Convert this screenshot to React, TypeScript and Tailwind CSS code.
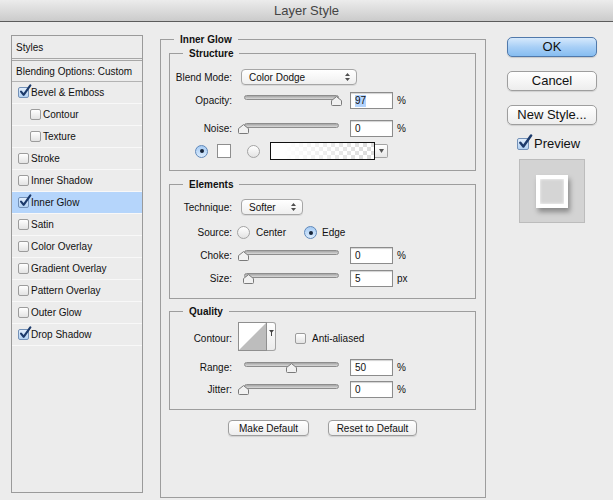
import React from "react";

const Checkbox = ({ checked = false, big = false }: { checked?: boolean; big?: boolean }) => (
  <span
    className={`relative inline-block shrink-0 rounded-[2px] border ${
      checked
        ? "border-[#7391b8] bg-gradient-to-b from-[#e2eefc] to-[#b2d1f2]"
        : "border-[#9c9c9c] bg-gradient-to-b from-white to-[#e3e3e3]"
    } ${big ? "w-[12px] h-[12px]" : "w-[11px] h-[11px]"}`}
  >
    {checked && (
      <svg
        className={big ? "absolute left-[0px] top-[-5px]" : "absolute left-[0px] top-[-4px]"}
        width={big ? 15 : 13}
        height={big ? 15 : 13}
        viewBox="0 0 14 14"
      >
        <path
          d="M2.2 8.2 L5 11.6 L12.2 1.4"
          fill="none"
          stroke="#1c3a6b"
          strokeWidth="2.3"
          strokeLinecap="round"
          strokeLinejoin="round"
        />
      </svg>
    )}
  </span>
);

const Radio = ({ on = false }: { on?: boolean }) => (
  <span
    className={`flex items-center justify-center shrink-0 w-[13px] h-[13px] rounded-full border ${
      on
        ? "border-[#5f88ba] bg-gradient-to-b from-[#a6cbf3] to-[#dcecfd]"
        : "border-[#a3a3a3] bg-gradient-to-b from-white to-[#e3e3e3]"
    }`}
  >
    {on && <span className="w-[4px] h-[4px] rounded-full bg-[#17253a]" />}
  </span>
);

const UpDown = () => (
  <svg width="5" height="8" viewBox="0 0 5 8">
    <path d="M2.5 0 L5 3 H0 Z M2.5 8 L5 5 H0 Z" fill="#4f4f4f" />
  </svg>
);

const Thumb = ({ pos }: { pos: string }) => (
  <svg className={`absolute top-[4px] ${pos}`} width="11" height="10" viewBox="0 0 11 10">
    <path
      d="M5.5 0.6 L10.5 4.6 V8.5 Q10.5 9.5 9.5 9.5 H1.5 Q0.5 9.5 0.5 8.5 V4.6 Z"
      fill="#f1f1f1"
      stroke="#7a7a7a"
    />
  </svg>
);

const SliderRow = ({
  label,
  pos,
  value,
  unit,
  selected = false,
  mt,
}: {
  label: string;
  pos: string;
  value: string;
  unit: string;
  selected?: boolean;
  mt: string;
}) => (
  <div className={`flex h-[17px] ${mt}`}>
    <span className="w-[62px] shrink-0 flex items-center justify-end">{label}</span>
    <div className="relative ml-[9px] w-[101px] shrink-0">
      <div className="mt-[3px] mx-[3px] h-[5px] rounded-full border border-[#8d8d8d] bg-gradient-to-b from-[#a4a4a4] to-[#dadada]" />
      <Thumb pos={pos} />
    </div>
    <div className="ml-[8px] w-[43px] shrink-0 bg-white border border-[#8c8c8c] shadow-[inset_0_1px_1px_rgba(0,0,0,0.18)] flex items-center pl-[4px]">
      <span className={selected ? "bg-[#b4d4fd] leading-[12px]" : "leading-[12px]"}>{value}</span>
    </div>
    <span className="ml-[4px] flex items-center">{unit}</span>
  </div>
);

const Group = ({
  title,
  className,
  children,
}: {
  title: string;
  className: string;
  children: React.ReactNode;
}) => (
  <div className={`flex flex-col shrink-0 ${className}`}>
    <div className="flex h-[13px] shrink-0">
      <div className="w-[14px] mt-[6px] border-t border-l border-[#9d9d9d]" />
      <span className="px-[6px] leading-[13px] font-bold">{title}</span>
      <div className="flex-1 mt-[6px] border-t border-r border-[#9d9d9d]" />
    </div>
    <div className="flex-1 flex flex-col border-l border-r border-b border-[#9d9d9d]">{children}</div>
  </div>
);

const styleRows: { name: string; checked: boolean; indent: boolean; selected: boolean }[] = [
  { name: "Bevel & Emboss", checked: true, indent: false, selected: false },
  { name: "Contour", checked: false, indent: true, selected: false },
  { name: "Texture", checked: false, indent: true, selected: false },
  { name: "Stroke", checked: false, indent: false, selected: false },
  { name: "Inner Shadow", checked: false, indent: false, selected: false },
  { name: "Inner Glow", checked: true, indent: false, selected: true },
  { name: "Satin", checked: false, indent: false, selected: false },
  { name: "Color Overlay", checked: false, indent: false, selected: false },
  { name: "Gradient Overlay", checked: false, indent: false, selected: false },
  { name: "Pattern Overlay", checked: false, indent: false, selected: false },
  { name: "Outer Glow", checked: false, indent: false, selected: false },
  { name: "Drop Shadow", checked: true, indent: false, selected: false },
];

const GrayButton = ({ label, className }: { label: string; className: string }) => (
  <div
    className={`flex items-center justify-center rounded-[4px] border border-[#9e9e9e] bg-gradient-to-b from-white to-[#ededed] shadow-[0_1px_1px_rgba(0,0,0,0.12)] ${className}`}
  >
    {label}
  </div>
);

export default function App() {
  return (
    <div className="w-[613px] h-[500px] overflow-hidden bg-[#ececec] text-[10px] text-[#111] font-['Liberation_Sans',Arial,sans-serif] flex flex-col">
      {/* Title bar */}
      <div className="h-[22px] shrink-0 border-b border-[#5c5c5c] bg-gradient-to-b from-[#ececec] to-[#cbcbcb] flex items-center justify-center text-[13px] text-[#444]">
        Layer Style
      </div>

      <div className="flex pl-[11px]">
        {/* Left styles list */}
        <div className="mt-[13px] w-[132px] h-[458px] shrink-0 border border-[#9a9a9a] flex flex-col">
          <div className="h-[25px] pl-[4px] flex items-center border-b-[3px] border-double border-[#a6a6a6]">
            Styles
          </div>
          <div className="h-[21px] pl-[4px] flex items-center border-b border-[#b3b3b3]">
            Blending Options: Custom
          </div>
          {styleRows.map((r) => (
            <div
              key={r.name}
              className={`h-[22px] flex items-center gap-[2px] border-b border-[#f8f8f8] ${
                r.indent ? "pl-[18px]" : "pl-[6px]"
              } ${r.selected ? "bg-[#b5d5fb]" : ""}`}
            >
              <Checkbox checked={r.checked} />
              <span>{r.name}</span>
            </div>
          ))}
        </div>

        {/* Middle panel */}
        <Group title="Inner Glow" className="ml-[17px] mt-[11px] w-[326px] h-[465px]">
          <div className="pl-[8px] pr-[9px] flex flex-col">
            <Group title="Structure" className="mt-[1px] h-[124px]">
              <div className="mt-[9px] flex h-[16px]">
                <span className="w-[62px] shrink-0 flex items-center justify-end">Blend Mode:</span>
                <div className="ml-[9px] w-[116px] flex items-center justify-between pl-[7px] pr-[6px] rounded-[4px] border border-[#a6a6a6] bg-gradient-to-b from-white to-[#efefef] shadow-[0_1px_0_rgba(0,0,0,0.08)]">
                  <span>Color Dodge</span>
                  <UpDown />
                </div>
              </div>
              <SliderRow label="Opacity:" pos="left-[90px]" value="97" unit="%" selected mt="mt-[7px]" />
              <SliderRow label="Noise:" pos="left-[-3px]" value="0" unit="%" mt="mt-[11px]" />
              <div className="mt-[5px] h-[18px] flex items-center">
                <span className="ml-[25px]">
                  <Radio on />
                </span>
                <span className="ml-[9px] w-[14px] h-[14px] border border-[#8e8e8e] bg-white" />
                <span className="ml-[16px]">
                  <Radio />
                </span>
                <span className="ml-[10px] w-[105px] h-[18px] border border-[#111] bg-[linear-gradient(to_right,#ffffff_12%,rgba(255,255,255,0)_95%),repeating-conic-gradient(#dcdcdc_0_25%,#ffffff_0_50%)] [background-size:auto,8px_8px]" />
                <span className="w-[13px] h-[14px] border border-l-0 border-[#a3a3a3] rounded-r-[2px] bg-gradient-to-b from-white to-[#e6e6e6] flex items-center justify-center">
                  <svg width="5" height="4" viewBox="0 0 5 4">
                    <path d="M0 0 H5 L2.5 4 Z" fill="#555" />
                  </svg>
                </span>
              </div>
            </Group>

            <Group title="Elements" className="mt-[7px] h-[121px]">
              <div className="mt-[8px] flex h-[16px]">
                <span className="w-[62px] shrink-0 flex items-center justify-end">Technique:</span>
                <div className="ml-[9px] w-[62px] flex items-center justify-between pl-[7px] pr-[6px] rounded-[4px] border border-[#a6a6a6] bg-gradient-to-b from-white to-[#efefef] shadow-[0_1px_0_rgba(0,0,0,0.08)]">
                  <span>Softer</span>
                  <UpDown />
                </div>
              </div>
              <div className="mt-[11px] h-[13px] flex items-center">
                <span className="w-[62px] shrink-0 text-right">Source:</span>
                <span className="ml-[5px] w-[67px] flex items-center gap-[6px]">
                  <Radio />
                  <span>Center</span>
                </span>
                <span className="flex items-center gap-[5px]">
                  <Radio on />
                  <span>Edge</span>
                </span>
              </div>
              <SliderRow label="Choke:" pos="left-[-3px]" value="0" unit="%" mt="mt-[8px]" />
              <SliderRow label="Size:" pos="left-[2px]" value="5" unit="px" mt="mt-[6px]" />
            </Group>

            <Group title="Quality" className="mt-[6px] h-[105px]">
              <div className="mt-[4px] h-[29px] flex">
                <span className="w-[62px] shrink-0 flex items-center justify-end mt-[4px]">Contour:</span>
                <span className="ml-[6px] w-[29px] h-[29px] border border-[#8f8f8f] bg-white flex">
                  <svg width="27" height="27" viewBox="0 0 27 27">
                    <polygon points="0,27 27,0 27,27" fill="#bdbdbd" />
                  </svg>
                </span>
                <span className="w-[9px] h-[29px] border border-l-0 border-[#a3a3a3] rounded-r-[3px] bg-gradient-to-b from-white to-[#ececec] flex justify-center pt-[7px]">
                  <svg width="5" height="6" viewBox="0 0 5 6">
                    <path d="M0 0 H5 L2.5 3 Z M2 2 H3 V6 H2 Z" fill="#444" />
                  </svg>
                </span>
                <span className="ml-[19px] mt-[4px] flex items-center gap-[6px]">
                  <Checkbox />
                  <span>Anti-aliased</span>
                </span>
              </div>
              <SliderRow label="Range:" pos="left-[45px]" value="50" unit="%" mt="mt-[8px]" />
              <SliderRow label="Jitter:" pos="left-[-3px]" value="0" unit="%" mt="mt-[5px]" />
            </Group>

            <div className="mt-[10px] flex justify-center gap-[19px]">
              <GrayButton label="Make Default" className="w-[81px] h-[16px]" />
              <GrayButton label="Reset to Default" className="w-[89px] h-[16px]" />
            </div>
          </div>
        </Group>

        {/* Right column */}
        <div className="ml-[21px] mt-[15px] w-[90px] shrink-0 flex flex-col text-[13px]">
          <div className="h-[20px] rounded-[5px] border border-[#5079ab] bg-gradient-to-b from-[#d6e9fc] via-[#a8cff6] to-[#86bdf1] flex items-center justify-center shadow-[0_1px_1px_rgba(0,0,0,0.15)]">
            OK
          </div>
          <GrayButton label="Cancel" className="mt-[14px] h-[20px] rounded-[5px]" />
          <GrayButton label="New Style..." className="mt-[14px] h-[20px] rounded-[5px]" />
          <div className="mt-[12px] h-[14px] flex items-center gap-[5px] pl-[10px]">
            <Checkbox checked big />
            <span>Preview</span>
          </div>
          <div className="mt-[8px] ml-[12px] w-[66px] h-[64px] bg-[#d3d3d3] border border-[#bcbcbc] flex items-center justify-center">
            <div className="w-[32px] h-[33px] border-[4px] border-white bg-[#d5d5d5] shadow-[2px_4px_5px_rgba(0,0,0,0.35),inset_0_0_3px_rgba(255,255,255,0.9)]" />
          </div>
        </div>
      </div>
    </div>
  );
}
